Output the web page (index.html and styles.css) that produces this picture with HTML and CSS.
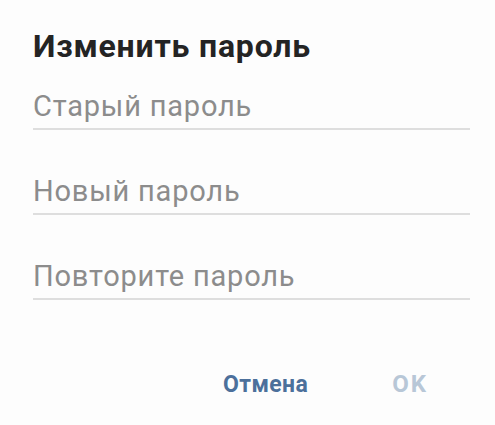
FILE: index.html
```html
<!DOCTYPE html>
<html lang="ru">
<head>
<meta charset="utf-8">
<title>Изменить пароль</title>
<link rel="stylesheet" href="styles.css">
</head>
<body>
<div class="dialog">
  <h1 class="title">Изменить пароль</h1>
  <div class="field"><span class="placeholder">Старый пароль</span></div>
  <div class="field"><span class="placeholder">Новый пароль</span></div>
  <div class="field"><span class="placeholder">Повторите пароль</span></div>
  <div class="actions">
    <span class="btn btn-cancel">Отмена</span>
    <span class="btn btn-ok">OK</span>
  </div>
</div>
</body>
</html>
```
FILE: styles.css
```css
html, body {
  margin: 0;
  padding: 0;
  background: #fdfdfd;
}
body {
  font-family: Roboto, "Noto Sans", sans-serif;
  width: 495px;
  height: 425px;
  overflow: hidden;
}
.dialog {
  padding: 28px 25px 0 33px;
}
.title {
  margin: 0 0 26px 0;
  font-size: 32px;
  line-height: 36px;
  font-weight: 700;
  color: #242424;
  letter-spacing: 0.8px;
}
.field {
  border-bottom: 2px solid #dedede;
  padding-bottom: 6px;
  margin-bottom: 45px;
}
.field:last-of-type {
  margin-bottom: 0;
}
.placeholder {
  display: block;
  font-size: 29px;
  line-height: 32px;
  color: #8c8c8c;
  letter-spacing: 0.8px;
}
.actions {
  display: flex;
  justify-content: flex-end;
  align-items: baseline;
  gap: 84px;
  margin-top: 70px;
  padding-right: 42px;
}
.btn {
  font-size: 23px;
  line-height: 28px;
  font-weight: 700;
  letter-spacing: 0.4px;
}
.btn-cancel {
  color: #4c709b;
}
.btn-ok {
  font-size: 24px;
  letter-spacing: 2px;
  color: #b8c7d7;
}
```
